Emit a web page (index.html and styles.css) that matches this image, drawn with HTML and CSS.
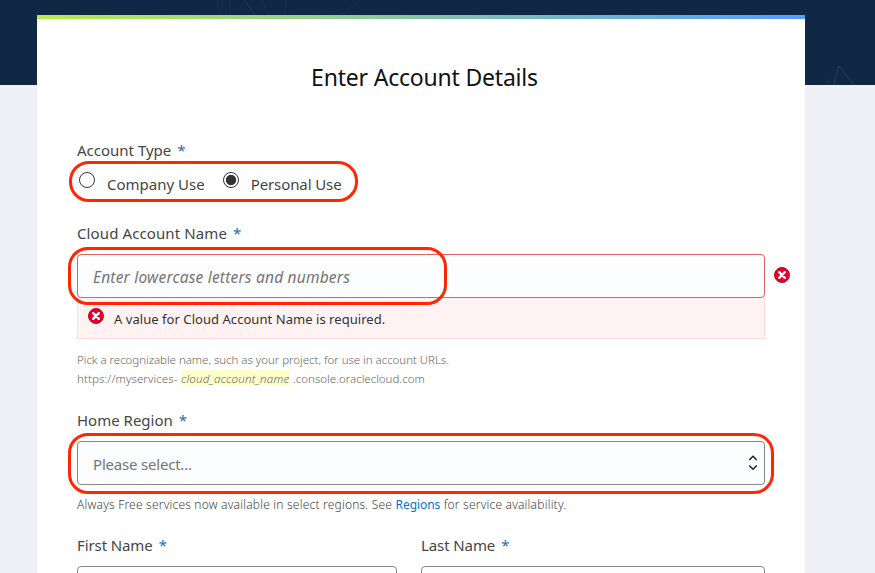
FILE: index.html
```html
<!DOCTYPE html>
<html lang="en">
<head>
<meta charset="utf-8">
<title>Enter Account Details</title>
<link rel="stylesheet" href="styles.css">
</head>
<body>
<svg class="backdrop" width="875" height="85" viewBox="0 0 875 85" fill="none" stroke="#1f3853" aria-hidden="true">
  <path d="M217 0l2 15M222 0v15M230 0v15M262 0l6 15M286 0l-1 15M361 0l-20 15" opacity=".5"/>
  <path d="M244 0l11 15"/>
  <path d="M839 66l-14 19" opacity=".4"/>
  <path d="M833.500 85l5.500-19 15 19" stroke="#243f5b"/>
</svg>
<main class="card">
  <h1 class="title">Enter Account Details</h1>

  <div class="label account-type">Account Type<span class="star">*</span></div>
  <div class="radios">
    <label class="radio"><span class="dot"></span><span class="radio-text">Company Use</span></label>
    <label class="radio"><span class="dot checked"></span><span class="radio-text personal">Personal Use</span></label>
    <span class="mark mark-radios"></span>
  </div>

  <div class="label account-name"><span class="account-name-text">Cloud Account Name</span><span class="star">*</span></div>
  <div class="field-row">
    <div class="field invalid"><span class="placeholder">Enter lowercase letters and numbers</span></div>
    <svg class="error-icon" width="16" height="16" viewBox="0 0 16 16"><circle cx="8" cy="8" r="7.500" fill="#e4002b" stroke="#bd0824"/><path d="M5.200 5.200l5.600 5.600M10.800 5.200l-5.600 5.600" stroke="#fff" stroke-width="2.400" stroke-linecap="round"/></svg>
    <span class="mark mark-name"></span>
  </div>
  <div class="error">
    <svg class="error-icon" width="16" height="16" viewBox="0 0 16 16"><circle cx="8" cy="8" r="7.500" fill="#e4002b" stroke="#bd0824"/><path d="M5.200 5.200l5.600 5.600M10.800 5.200l-5.600 5.600" stroke="#fff" stroke-width="2.400" stroke-linecap="round"/></svg>
    <span class="error-text">A value for Cloud Account Name is required.</span>
  </div>
  <div class="hint name-hint">Pick a recognizable name, such as your project, for use in account URLs.</div>
  <div class="hint url"><span class="url-start">https://myservices-</span><em>cloud_account_name</em><span class="url-end">.console.oraclecloud.com</span></div>

  <div class="label region">Home Region<span class="star">*</span></div>
  <div class="field-row">
    <div class="field select"><span class="select-text">Please select...</span>
      <svg width="10" height="16" viewBox="0 0 10 16" fill="none" stroke="#222" stroke-width="1.500"><path d="M1.200 5l3.800-3.700L8.800 5M1.200 10.500L5 14.200l3.800-3.700"/></svg>
    </div>
    <span class="mark mark-region"></span>
  </div>
  <div class="hint region-hint">Always Free services now available in select regions. See <a>Regions</a> for service availability.</div>

  <div class="names">
    <div><div class="label">First Name<span class="star">*</span></div><div class="field"></div></div>
    <div><div class="label">Last Name<span class="star">*</span></div><div class="field"></div></div>
  </div>
</main>
</body>
</html>
```
FILE: styles.css
```css
* { box-sizing: border-box; }
body {
  margin: 0;
  height: 573px;
  overflow: hidden;
  padding-top: 15px;
  background: linear-gradient(#102845 85px, #eff0f5 85px);
  font-family: "Noto Sans", "Open Sans", sans-serif;
  color: #454545;
}
.backdrop { position: absolute; top: 0; left: 0; }
.card {
  position: relative;
  width: 768px;
  height: 558px;
  overflow: hidden;
  margin-left: 37px;
  padding: 0 40px;
  background: linear-gradient(90deg, #b8eb4b, #529eff) top / 100% 4px no-repeat #fff;
}
.title {
  margin: 0;
  padding: 44px 0 0 7px;
  line-height: 36px;
  font-size: 23px;
  font-weight: 400;
  text-align: center;
  color: #111;
  letter-spacing: -0.2px;
}
.label { display: flex; height: 22px; line-height: 22px; font-size: 15px; white-space: nowrap; }
.star { margin-left: 6px; color: #2a6ab3; }
.account-type { margin-top: 44px; }
.radios { position: relative; display: flex; height: 34px; margin-top: 9px; gap: 18px; }
.radio { display: flex; }
.dot { width: 16px; height: 16px; margin: 2px 12px 0 2px; border: 1px solid #333; border-radius: 50%; }
.radio + .radio .dot { margin-left: 0; }
.dot.checked { background: radial-gradient(circle, #333 4.800px, #fff 5.500px); }
.radio-text { font-size: 15px; line-height: 22px; margin-top: 3px; }
.personal { letter-spacing: -0.1px; }
.account-name { margin-top: 18px; }
.account-name-text { letter-spacing: 0.11px; }
.field-row { position: relative; display: flex; align-items: center; gap: 9px; margin-top: 10px; }
.field {
  display: flex;
  align-items: center;
  flex: 0 0 688px;
  height: 44px;
  padding: 0 15px;
  border: 1px solid #878787;
  border-radius: 4px;
  background: #fcfdff;
  white-space: nowrap;
}
.invalid { border-color: #de6060; }
.placeholder { font-size: 15.500px; letter-spacing: 0.2px; font-style: italic; color: #757575; padding-top: 2px; }
.error-icon { flex: none; }
.field-row > .error-icon { margin-top: -2px; }
.error {
  display: flex;
  height: 41px;
  padding: 10px 10px 0;
  gap: 10px;
  border: 1px solid #ffdcdc;
  border-top: 0;
  background: #fff2f2;
  font-size: 13px;
  line-height: 22px;
  letter-spacing: 0.05px;
  color: #333;
}
.hint { height: 19px; line-height: 19px; font-size: 12px; color: #666; font-weight: 300; white-space: nowrap; }
.name-hint { margin-top: 11px; font-size: 11.500px; letter-spacing: -0.03px; }
.url { display: flex; font-size: 11.500px; }
.url-start { width: 100px; letter-spacing: 0.1px; }
.url em { margin: 1px 3px 3px 4px; width: 109px; line-height: 17px; letter-spacing: 0.2px; background: #ffffcc; }
.region { margin-top: 21px; }
.select { justify-content: space-between; padding-right: 6px; }
.select-text { font-size: 15px; letter-spacing: -0.2px; color: #757575; padding-top: 2px; }
.region-hint { margin-top: 10px; color: #444; letter-spacing: 0.2px; }
.region-hint a { color: #0572ce; font-weight: 400; letter-spacing: -0.05px; }
.names { display: grid; grid-template-columns: 320px 344px; gap: 24px; margin-top: 20px; }
.names .label { letter-spacing: -0.1px; }
.names .field { margin-top: 10px; }
.mark { position: absolute; border: 3px solid #ff2600; border-radius: 20px; }
.mark-radios { left: -8px; top: -9px; width: 289px; height: 41px; }
.mark-name { left: -9px; top: -7px; width: 379px; height: 58px; }
.mark-region { left: -9px; top: -8px; width: 706px; height: 61px; }
```
